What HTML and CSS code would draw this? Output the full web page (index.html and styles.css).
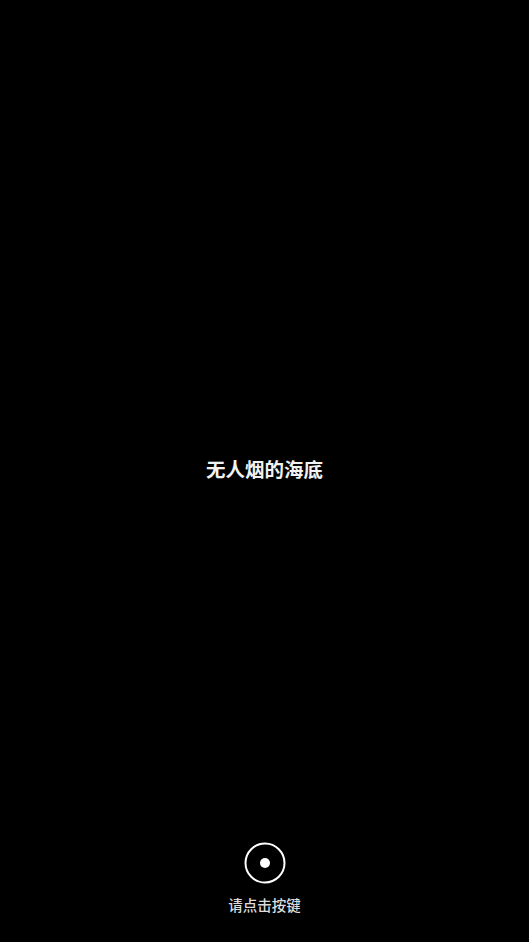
FILE: index.html
```html
<!DOCTYPE html>
<html lang="zh">
<head>
<meta charset="utf-8">
<link rel="stylesheet" href="styles.css">
</head>
<body>
<div class="screen">
  <div class="top"></div>
  <h1 class="title">无人烟的海底</h1>
  <div class="footer">
    <svg class="btn" width="42" height="42" viewBox="0 0 42 42">
      <circle cx="21" cy="21" r="19.5" fill="none" stroke="#fff" stroke-width="2"/>
      <circle cx="21" cy="21" r="5" fill="#fff"/>
    </svg>
    <div class="hint">请点击按键</div>
  </div>
</div>
</body>
</html>
```
FILE: styles.css
```css
html, body {
  margin: 0;
  padding: 0;
  background: #000;
}
.screen {
  height: 942px;
  display: grid;
  grid-template-rows: 1fr auto 1fr;
  justify-items: center;
  font-family: "Noto Sans CJK SC", "Noto Sans", sans-serif;
}
.title {
  margin: 0 0 4px;
  color: #f2f2f2;
  font-size: 19.5px;
  font-weight: 700;
  line-height: 26px;
}
.footer {
  align-self: end;
  display: flex;
  flex-direction: column;
  align-items: center;
  padding-bottom: 27px;
}
.btn {
  display: block;
}
.hint {
  margin-top: 11px;
  color: #dcdcdc;
  font-size: 14.5px;
  font-weight: 500;
  line-height: 20px;
}
```
